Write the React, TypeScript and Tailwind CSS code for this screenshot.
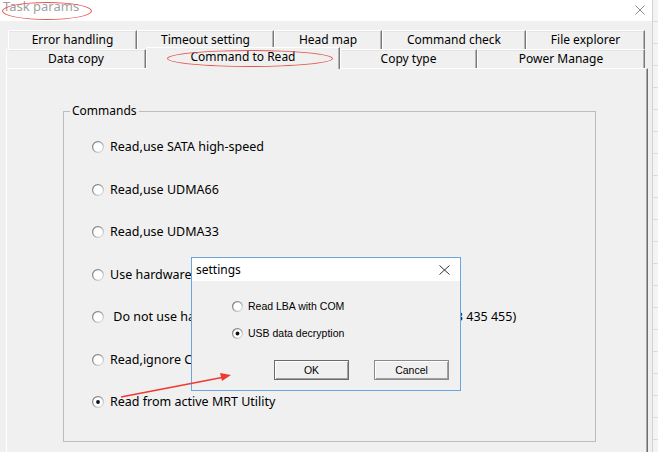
import React from "react";

function Radio({ checked = false, size = 12 }: { checked?: boolean; size?: number }) {
  const r = size / 2;
  return (
    <svg width={size} height={size} viewBox={`0 0 ${size} ${size}`} className="shrink-0">
      <defs>
        <linearGradient id="rg" x1="0" y1="0" x2="1" y2="1">
          <stop offset="0" stopColor="#6a6a6a" />
          <stop offset="0.55" stopColor="#a8a8a8" />
          <stop offset="1" stopColor="#eeeeee" />
        </linearGradient>
      </defs>
      <circle cx={r} cy={r} r={r - 0.6} fill="#ffffff" stroke="url(#rg)" strokeWidth="1.2" />
      {checked && <circle cx={r} cy={r} r={1.9} fill="#111111" />}
    </svg>
  );
}

function Tab({ w, label, selected = false }: { w: string; label: string; selected?: boolean }) {
  return (
    <div
      className={
        selected
          ? `${w} relative z-10 h-[22px] -mb-[1px] flex items-start justify-center pt-[1px] bg-[#f0f0f0] border-t border-l border-white border-r border-r-[#7a7a7a] shadow-[inset_-1px_0_0_#b4b4b4] text-[12px] leading-[16px]`
          : `${w} h-[19px] flex items-center justify-center bg-[#f0f0f0] border-t border-l border-white border-r border-r-[#7a7a7a] shadow-[inset_-1px_0_0_#b4b4b4,inset_0_1px_0_#e4e4e4] text-[12px] leading-[16px]`
      }
    >
      {label}
    </div>
  );
}

const items: { label: string; checked?: boolean }[] = [
  { label: "Read,use SATA high-speed" },
  { label: "Read,use UDMA66" },
  { label: "Read,use UDMA33" },
  { label: "Use hardware reset, use PIO mode" },
  { label: "\u00a0Do not use hardware reset before read (for WD 413 423 433 435 455)" },
  { label: "Read,ignore CRC errors" },
  { label: "Read from active MRT Utility", checked: true },
];

export default function App() {
  return (
    <div className="relative w-[658px] h-[452px] overflow-hidden bg-[#f0f0f0] font-['Noto_Sans',sans-serif] text-black flex">
      <div className="w-[652px] flex flex-col shrink-0">
        {/* title bar */}
        <div className="h-[21px] bg-white flex items-start justify-between shrink-0">
          <span className="ml-[3px] -mt-[3px] text-[13px] leading-[18px] text-[#a0a0a0]">Task params</span>
          <svg width="10" height="10" viewBox="0 0 10 10" className="mt-[5px] mr-[7px]">
            <path d="M0.5 0.5 L9.5 9.5 M9.5 0.5 L0.5 9.5" stroke="#8c8c8c" strokeWidth="1" />
          </svg>
        </div>

        {/* tabs */}
        <div className="pt-[9px] flex flex-col shrink-0">
          <div className="flex ml-[8px] h-[19px]">
            <Tab w="w-[129px]" label="Error handling" />
            <Tab w="w-[137px]" label="Timeout setting" />
            <Tab w="w-[108px]" label="Head map" />
            <Tab w="w-[144px]" label="Command check" />
            <Tab w="w-[119px]" label="File explorer" />
          </div>
          <div className="flex ml-[6px] h-[19px] items-end">
            <Tab w="w-[140px]" label="Data copy" />
            <Tab w="w-[194px]" label="Command to Read" selected />
            <Tab w="w-[137px]" label="Copy type" />
            <Tab w="w-[168px]" label="Power Manage" />
          </div>
        </div>

        {/* panel */}
        <div className="ml-[6px] w-[642px] flex-1 border-t border-l border-white border-r border-r-[#6e6e6e] shadow-[inset_-1px_0_0_#a8a8a8] pl-[56px] pt-[34px]">
          <fieldset className="w-[533px] h-[339px] border border-[#bdbdbd]">
            <legend className="ml-[6px] px-[2px] text-[12px] leading-[16px]">Commands</legend>
            <div className="flex flex-col pt-[7px]">
              {items.map((it, i) => (
                <div key={i} className="h-[42.5px] flex items-center pl-[28px] gap-[6px] text-[12.5px] leading-[16px] whitespace-nowrap">
                  <Radio checked={it.checked} />
                  <span>{it.label}</span>
                </div>
              ))}
            </div>
          </fieldset>
        </div>
      </div>

      {/* background window edge */}
      <div className="flex-1 border-l border-[#d2d2d2] bg-[#f4f4f4] bg-[repeating-linear-gradient(to_bottom,transparent_0px,transparent_21px,#dcdcdc_21px,#dcdcdc_22px)]" />

      {/* settings dialog */}
      <div className="absolute left-[191px] top-[257px] w-[270px] h-[134px] z-20 border border-[#69a6de] bg-[#f0f0f0] flex flex-col">
        <div className="h-[23px] bg-white flex items-center justify-between pl-[4px] shrink-0">
          <span className="text-[12px] leading-[16px]">settings</span>
          <svg width="11" height="10" viewBox="0 0 11 10" className="mr-[10px]">
            <path d="M0.5 0.5 L10.5 9.5 M10.5 0.5 L0.5 9.5" stroke="#333333" strokeWidth="1" />
          </svg>
        </div>
        <div className="flex flex-col pl-[40px] pt-[15px] font-['Liberation_Sans',Arial,sans-serif] text-[10.5px] leading-[14px]">
          <div className="h-[20px] flex items-center gap-[5px]">
            <Radio size={11} />
            <span>Read LBA with COM</span>
          </div>
          <div className="h-[20px] mt-[7px] flex items-center gap-[5px]">
            <Radio size={11} checked />
            <span>USB data decryption</span>
          </div>
          <div className="flex gap-[25px] ml-[42px] mt-[17px]">
            <div className="w-[75px] h-[20px] flex items-center justify-center bg-[#f0f0f0] border border-[#6b6b6b] shadow-[inset_1px_1px_0_#ffffff,inset_-1px_-1px_0_#a0a0a0]">OK</div>
            <div className="w-[75px] h-[20px] flex items-center justify-center bg-[#f0f0f0] border border-[#8a8a8a] shadow-[inset_1px_1px_0_#ffffff,inset_-1px_-1px_0_#a0a0a0]">Cancel</div>
          </div>
        </div>
      </div>

      {/* annotations */}
      <div className="absolute left-[2px] top-[2px] w-[90px] h-[18px] rounded-[50%] border border-[#e4554c] z-30" />
      <div className="absolute left-[167px] top-[50px] w-[166px] h-[17px] rounded-[50%] border border-[#e4554c] z-30" />
      <svg className="absolute left-0 top-0 z-30" width="658" height="452" viewBox="0 0 658 452">
        <line x1="121" y1="397" x2="222" y2="377.5" stroke="#ee3a30" strokeWidth="1.6" />
        <polygon points="231,375 220,373 222,381" fill="#ee3a30" />
      </svg>
    </div>
  );
}
